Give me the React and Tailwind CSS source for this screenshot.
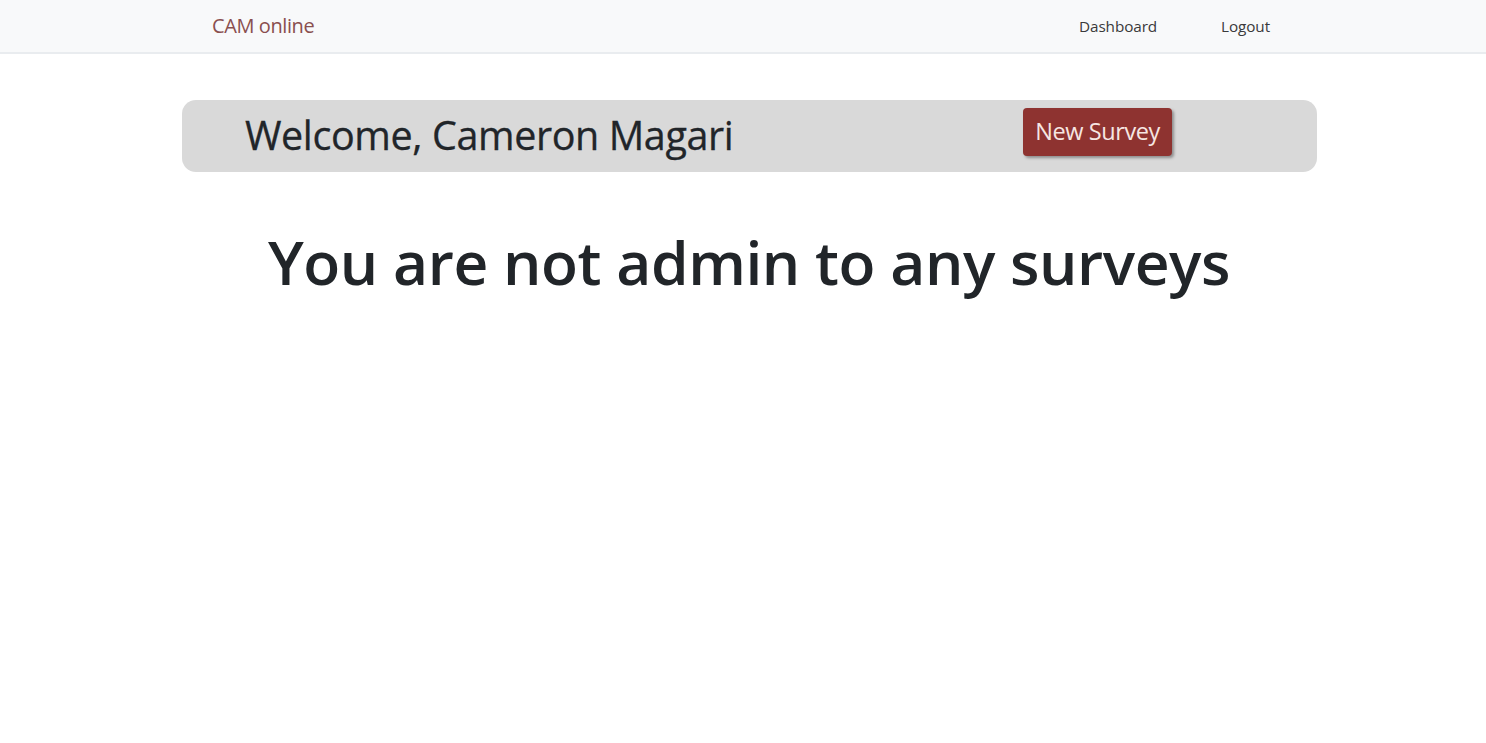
import React from 'react';

const App = () => {
  return (
    <div className="min-h-screen bg-white text-[#212529] font-['Open_Sans','Noto_Sans',sans-serif]">
      <nav className="h-[54px] bg-[#f8f9fa] border-b-2 border-[#e9ecef] flex items-center pl-[212px] pr-[216px]">
        <a className="text-[20px] text-[#8a4f4f] tracking-[-0.4px]">CAM online</a>
        <div className="ml-auto flex items-center gap-[64px] text-[15.3px] text-[#3a3a3a] tracking-[-0.1px]">
          <a>Dashboard</a>
          <a>Logout</a>
        </div>
      </nav>

      <main className="pt-[46px]">
        <div className="ml-[182px] w-[1135px] h-[72px] rounded-[14px] bg-[#d9d9d9] flex items-center pl-[63px] pr-[145px]">
          <h2 className="text-[39.5px] font-medium tracking-[-0.4px] leading-none [-webkit-text-stroke:0.3px_#212529]">Welcome, Cameron Magari</h2>
          <button className="ml-auto mb-[8px] h-[48px] px-[12px] rounded-[4px] bg-[#8e3330] text-[#f6e6e2] text-[23.5px] tracking-[-0.4px] shadow-[2px_2px_3px_rgba(0,0,0,0.35)]">
            New Survey
          </button>
        </div>

        <h1 className="mt-[60px] ml-[12px] text-center text-[60.5px] font-semibold tracking-[-0.45px] leading-none">
          You are not admin to any surveys
        </h1>
      </main>
    </div>
  );
};

export default App;
